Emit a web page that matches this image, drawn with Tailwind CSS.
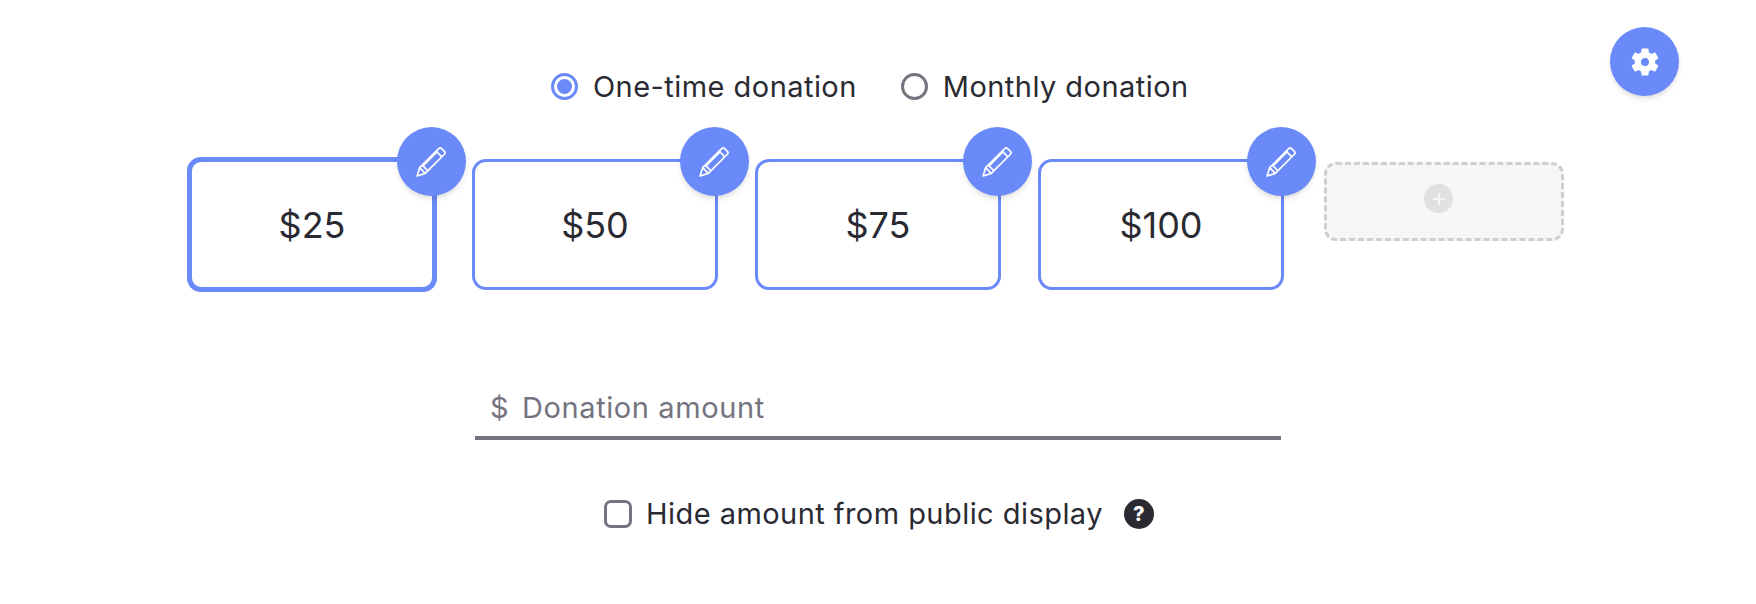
<!DOCTYPE html>
<html lang="en">
<head>
  <meta charset="UTF-8">
  <title>Donation</title>
  <script src="https://cdn.jsdelivr.net/npm/@tailwindcss/browser@4"></script>
</head>
<body class="bg-white text-[#2a2a33] font-['Inter',sans-serif]">
  <main class="relative w-[1756px] h-[604px] overflow-hidden">
    <!-- settings -->
    <button class="absolute left-[1610px] top-[27px] w-[69px] h-[69px] rounded-full bg-[#6a8afa] shadow-md flex items-center justify-center">
      <svg class="w-[34px] h-[34px]" viewBox="0 0 24 24" fill="#fff" fill-rule="evenodd"><path d="M19.14 12.94c.04-.3.06-.61.06-.94s-.02-.64-.07-.94l2.03-1.58a.49.49 0 0 0 .12-.61l-1.92-3.32a.49.49 0 0 0-.59-.22l-2.39.96a7 7 0 0 0-1.62-.94l-.36-2.54a.48.48 0 0 0-.48-.41h-3.84a.48.48 0 0 0-.47.41l-.36 2.54c-.59.24-1.13.57-1.62.94l-2.39-.96a.49.49 0 0 0-.59.22L2.74 8.87a.47.47 0 0 0 .12.61l2.03 1.58c-.05.3-.09.63-.09.94s.02.64.07.94l-2.03 1.58a.49.49 0 0 0-.12.61l1.92 3.32c.12.22.37.29.59.22l2.39-.96c.5.38 1.03.7 1.62.94l.36 2.54c.05.24.24.41.48.41h3.84c.24 0 .44-.17.47-.41l.36-2.54c.59-.24 1.13-.56 1.62-.94l2.39.96c.22.08.47 0 .59-.22l1.92-3.32a.47.47 0 0 0-.12-.61l-2.01-1.58zM12 14.800A2.800 2.800 0 1 1 12 9.200a2.800 2.800 0 0 1 0 5.600z"/></svg>
    </button>

    <div class="flex flex-col">
      <!-- frequency -->
      <div class="flex items-start pl-[551px] pt-[70px] h-[159px] text-[29px] leading-[32px] tracking-[0.45px]">
        <label class="flex items-center gap-[15px]">
          <span class="w-[27px] h-[27px] rounded-full border-[3px] border-[#6a8afa] flex items-center justify-center"><span class="w-[15px] h-[15px] rounded-full bg-[#6a8afa]"></span></span>
          <span class="pt-[1px]">One-time donation</span>
        </label>
        <label class="flex items-center gap-[15px] ml-[44px]">
          <span class="w-[27px] h-[27px] rounded-full border-[3px] border-[#74747f]"></span>
          <span class="pt-[1px]">Monthly donation</span>
        </label>
      </div>

      <!-- amounts -->
      <div class="flex items-start pl-[189px] gap-[37px] h-[131px]">
        <div class="relative shrink-0 w-[250px] h-[135px] -mx-[2px] -mt-[2px] rounded-[14px] border-[5px] border-[#6a8afa] flex items-center justify-center text-[36px]">
          $25
          <span class="absolute left-[205px] -top-[35px] w-[69px] h-[69px] rounded-full bg-[#6a8afa] shadow-md flex items-center justify-center">
            <svg class="w-[33px] h-[33px]" viewBox="0 0 32 32" fill="none" stroke="#fff" stroke-width="1.6" stroke-linejoin="round"><path d="M2 30l2.500-8L23 3.500a2 2 0 0 1 2.800 0l2.700 2.700a2 2 0 0 1 0 2.800L10 27.500z"/><path d="M4.500 22l5.500 5.500M7 19.500l5.500 5.500M20.500 6l5.500 5.500M8 20L22 6"/></svg>
          </span>
        </div>
        <div class="relative shrink-0 w-[246px] h-[131px] rounded-[14px] border-[3px] border-[#6a8afa] flex items-center justify-center text-[36px]">
          $50
          <span class="absolute left-[205px] -top-[35px] w-[69px] h-[69px] rounded-full bg-[#6a8afa] shadow-md flex items-center justify-center">
            <svg class="w-[33px] h-[33px]" viewBox="0 0 32 32" fill="none" stroke="#fff" stroke-width="1.6" stroke-linejoin="round"><path d="M2 30l2.500-8L23 3.500a2 2 0 0 1 2.800 0l2.700 2.700a2 2 0 0 1 0 2.800L10 27.500z"/><path d="M4.500 22l5.500 5.500M7 19.500l5.500 5.500M20.500 6l5.500 5.500M8 20L22 6"/></svg>
          </span>
        </div>
        <div class="relative shrink-0 w-[246px] h-[131px] rounded-[14px] border-[3px] border-[#6a8afa] flex items-center justify-center text-[36px]">
          $75
          <span class="absolute left-[205px] -top-[35px] w-[69px] h-[69px] rounded-full bg-[#6a8afa] shadow-md flex items-center justify-center">
            <svg class="w-[33px] h-[33px]" viewBox="0 0 32 32" fill="none" stroke="#fff" stroke-width="1.6" stroke-linejoin="round"><path d="M2 30l2.500-8L23 3.500a2 2 0 0 1 2.800 0l2.700 2.700a2 2 0 0 1 0 2.800L10 27.500z"/><path d="M4.500 22l5.500 5.500M7 19.500l5.500 5.500M20.500 6l5.500 5.500M8 20L22 6"/></svg>
          </span>
        </div>
        <div class="relative shrink-0 w-[246px] h-[131px] rounded-[14px] border-[3px] border-[#6a8afa] flex items-center justify-center text-[36px]">
          $100
          <span class="absolute left-[206px] -top-[35px] w-[69px] h-[69px] rounded-full bg-[#6a8afa] shadow-md flex items-center justify-center">
            <svg class="w-[33px] h-[33px]" viewBox="0 0 32 32" fill="none" stroke="#fff" stroke-width="1.6" stroke-linejoin="round"><path d="M2 30l2.500-8L23 3.500a2 2 0 0 1 2.800 0l2.700 2.700a2 2 0 0 1 0 2.800L10 27.500z"/><path d="M4.500 22l5.500 5.500M7 19.500l5.500 5.500M20.500 6l5.500 5.500M8 20L22 6"/></svg>
          </span>
        </div>
        <div class="shrink-0 w-[240px] h-[79px] ml-[3px] mt-[3px] rounded-[12px] border-[3px] border-dashed border-[#cfcfcf] bg-[#f6f6f6] flex items-center justify-center">
          <span class="w-[29px] h-[29px] mb-[6px] mr-[11px] rounded-full bg-[#e1e1e3] flex items-center justify-center">
            <svg class="w-[14px] h-[14px]" viewBox="0 0 14 14" stroke="#f6f6f6" stroke-width="2.2"><path d="M7 1v12M1 7h12"/></svg>
          </span>
        </div>
      </div>

      <!-- custom amount -->
      <div class="ml-[475px] mt-[86px] w-[806px] h-[64px] border-b-[4px] border-[#74747f] flex items-center pl-[15px] pt-[3px] text-[29px] tracking-[0.6px] text-[#74747f]">
        <span class="w-[32px]">$</span>
        <span>Donation amount</span>
      </div>

      <!-- hide amount -->
      <div class="flex items-center ml-[604px] mt-[57px] text-[29px] leading-[32px] tracking-[0.45px]">
        <span class="w-[28px] h-[28px] rounded-[7px] border-[3px] border-[#74747f]"></span>
        <span class="ml-[14px] pt-[1px]">Hide amount from public display</span>
        <span class="ml-[21px] w-[30px] h-[30px] rounded-full bg-[#2a2a33] text-white font-extrabold text-[20px] leading-[30px] text-center">?</span>
      </div>
    </div>
  </main>
</body>
</html>
